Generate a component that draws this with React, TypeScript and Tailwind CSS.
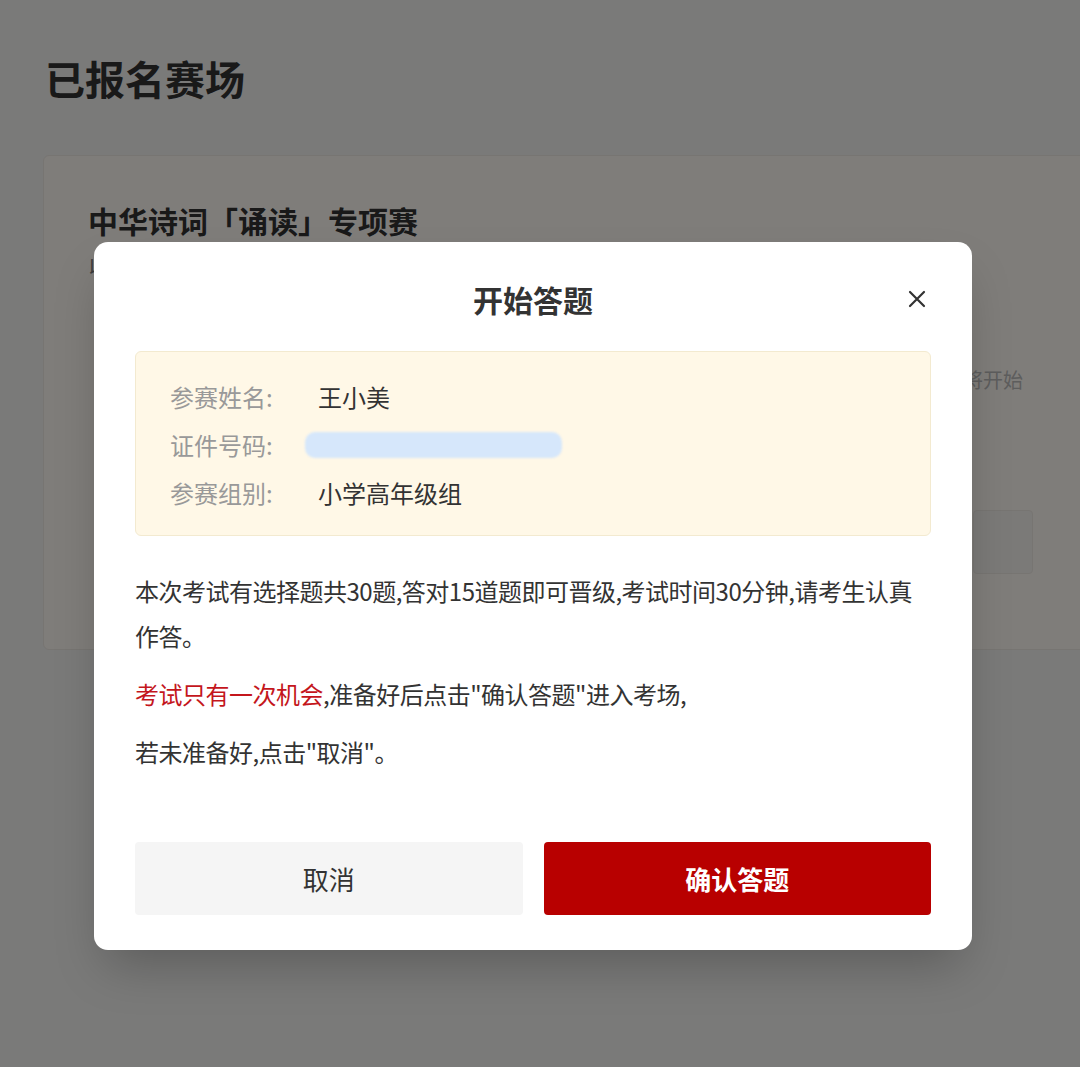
import React from 'react';

const FONT = { fontFamily: '"Noto Sans CJK SC", "Noto Sans", sans-serif' };

function InfoRow({ label, children }: { label: string; children: React.ReactNode }) {
  return (
    <div className="flex items-center h-[48px]">
      <span className="w-[148px] text-[#999999]">{label}</span>
      {children}
    </div>
  );
}

export default function App() {
  return (
    <div className="relative w-full h-[1067px] overflow-hidden bg-[#f5f4f2] text-[#333333]" style={FONT}>
      {/* 背景页面 */}
      <div className="pl-[43px] pt-[50px]">
        <h1 className="text-[40px] font-bold leading-[56px] ml-[2px] text-[#333333]">已报名赛场</h1>
        <div className="mt-[49px] w-[1100px] h-[495px] bg-[#fffaf5] border border-[#eeeae4] rounded-md pl-[44px] pt-[44px]">
          <h2 className="text-[30px] font-bold leading-[40px]">中华诗词「诵读」专项赛</h2>
          <p className="mt-[12px] text-[20px] text-[#777777] whitespace-nowrap">
            以中华经典诗词为载体，通过诵读展示诗词之美，弘扬中华优秀传统文化，激发青少年热...
          </p>
          <div className="flex justify-end w-[935px] mt-[83px]">
            <span className="text-[20px] text-[#bbbbbb]">即将开始</span>
          </div>
          <div className="flex justify-end w-[945px] mt-[115px]">
            <div className="w-[60px] h-[64px] rounded bg-[#f7f4f0] border border-[#eeeae4]" />
          </div>
        </div>
      </div>

      {/* 遮罩层 */}
      <div className="absolute inset-0 bg-black/50" />

      {/* 弹窗 */}
      <div className="absolute left-[94px] top-[242px] w-[878px] h-[708px] bg-white rounded-[14px] shadow-2xl px-[41px] pt-[36px]">
        <div className="relative flex items-center justify-center h-[42px]">
          <h3 className="text-[30px] font-bold text-[#333333] leading-[42px]">开始答题</h3>
          <button className="absolute right-[4px] top-[11px] text-[#333333]">
            <svg width="20" height="20" viewBox="0 0 20 20" fill="none" stroke="currentColor" strokeWidth="2.2" strokeLinecap="round">
              <path d="M3 3L17 17M17 3L3 17" />
            </svg>
          </button>
        </div>

        <div className="mt-[31px] h-[185px] bg-[#fff8e7] border border-[#f3ead0] rounded-[6px] pl-[34px] pt-[21px] text-[24px]">
          <InfoRow label="参赛姓名:">
            <span>王小美</span>
          </InfoRow>
          <InfoRow label="证件号码:">
            <span className="-ml-[13px] w-[257px] h-[26px] rounded-[10px] bg-[#d6e7fb] blur-[1px]" />
          </InfoRow>
          <InfoRow label="参赛组别:">
            <span>小学高年级组</span>
          </InfoRow>
        </div>

        <div className="mt-[32px] text-[24px] leading-[45px] tracking-[-0.5px] text-[#333333]">
          <p>本次考试有选择题共30题,答对15道题即可晋级,考试时间30分钟,请考生认真作答。</p>
          <p className="mt-[13px]">
            <span className="text-[#c4161c]">考试只有一次机会</span>,准备好后点击"确认答题"进入考场,
          </p>
          <p className="mt-[13px]">若未准备好,点击"取消"。</p>
        </div>

        <div className="mt-[68px] flex gap-[21px]">
          <button className="flex-1 h-[73px] rounded-[4px] bg-[#f5f5f5] text-[26px] text-[#333333]">取消</button>
          <button className="flex-1 h-[73px] rounded-[4px] bg-[#b80000] text-[26px] font-bold text-white">确认答题</button>
        </div>
      </div>
    </div>
  );
}
